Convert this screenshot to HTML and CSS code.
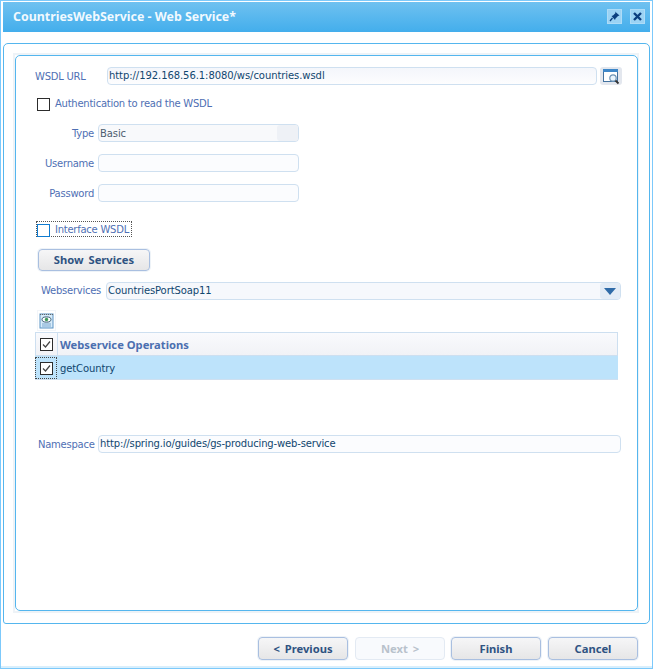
FILE: index.html
```html
<!DOCTYPE html>
<html lang="en">
<head>
<meta charset="utf-8">
<title>CountriesWebService - Web Service*</title>
<link rel="stylesheet" href="styles.css">
</head>
<body>
<div class="window">
  <header class="titlebar">
    <span class="title">CountriesWebService - Web Service*</span>
    <div class="tools">
      <span class="tool"><svg width="13" height="13" viewBox="0 0 13 13"><path d="M7 1.5l4.5 4-1.5.5-2.5 2.5-.5 1.5L3.5 6l1.5-.5L7.5 3z" fill="#0b3f7f"/><path d="M4.5 8L2 11" stroke="#0b3f7f" stroke-width="1.3"/></svg></span>
      <span class="tool"><svg width="13" height="13" viewBox="0 0 13 13"><path d="M3 3l7 7M10 3l-7 7" stroke="#0b3f7f" stroke-width="2.4"/></svg></span>
    </div>
  </header>
  <div class="outer">
    <div class="glow">
      <main class="inner">
        <div class="row row-url">
          <label class="lbl lbl-url">WSDL URL</label>
          <div class="field field-url">http://192.168.56.1:8080/ws/countries.wsdl</div>
          <button class="iconbtn" type="button" aria-label="Browse">
            <svg width="20" height="17" viewBox="0 0 20 17"><rect x="2.5" y="2.5" width="14" height="11" fill="#fff" stroke="#44729f"/><rect x="2" y="1" width="15" height="3" fill="#3f87c8"/><circle cx="12" cy="10" r="3.2" fill="#eaf5fd" stroke="#6d93b5" stroke-width="1.2"/><path d="M14.5 12.5l3 3" stroke="#333" stroke-width="1.8"/></svg>
          </button>
        </div>
        <div class="row row-auth">
          <span class="check"></span>
          <span class="lbl lbl-up">Authentication to read the WSDL</span>
        </div>
        <div class="row row-type">
          <label class="lbl lbl-right">Type</label>
          <div class="field field-short field-type">Basic<span class="type-arrow"></span></div>
        </div>
        <div class="row row-cred">
          <label class="lbl lbl-right">Username</label>
          <div class="field field-short"></div>
        </div>
        <div class="row row-cred">
          <label class="lbl lbl-right">Password</label>
          <div class="field field-short"></div>
        </div>
        <div class="row row-iface">
          <div class="focus">
            <span class="check check-blue"></span>
            <span class="lbl lbl-up">Interface WSDL</span>
          </div>
        </div>
        <button class="btn btn-show" type="button">Show Services</button>
        <div class="row row-ws">
          <label class="lbl lbl-ws lbl-up">Webservices</label>
          <div class="field field-ws">CountriesPortSoap11<span class="ws-arrow"><svg width="12" height="7" viewBox="0 0 12 7"><path d="M0 0h12L6 7z" fill="#2f6ba8"/></svg></span></div>
        </div>
        <div class="doc-icon">
          <svg width="15" height="16" viewBox="0 0 15 16"><rect x="1" y="1" width="13" height="14" fill="#d8ecfa" stroke="#5b93c4"/><path d="M1 1.5h13" stroke="#666" stroke-dasharray="1 1"/><ellipse cx="7.5" cy="6.5" rx="4.5" ry="2.6" fill="#fff" stroke="#35566f"/><circle cx="7.5" cy="6.5" r="1.7" fill="#3f9a5b"/><path d="M3 11h9M3 13h9" stroke="#7aa7cf"/></svg>
        </div>
        <div class="table">
          <div class="tr th">
            <div class="cell-check"><span class="check check-on"><svg width="11" height="11" viewBox="0 0 11 11"><path d="M2 5.5L4.5 8 9 2.5" fill="none" stroke="#444" stroke-width="1.2"/></svg></span></div>
            <div class="cell-text">Webservice Operations</div>
          </div>
          <div class="tr td">
            <div class="cell-check cell-focus"><span class="check check-on"><svg width="11" height="11" viewBox="0 0 11 11"><path d="M2 5.5L4.5 8 9 2.5" fill="none" stroke="#444" stroke-width="1.2"/></svg></span></div>
            <div class="cell-text">getCountry</div>
          </div>
        </div>
        <div class="row row-ns">
          <label class="lbl lbl-ns">Namespace</label>
          <div class="field field-ns">http://spring.io/guides/gs-producing-web-service</div>
        </div>
      </main>
    </div>
  </div>
  <footer class="footer">
    <button class="btn" type="button">&lt; Previous</button>
    <button class="btn btn-disabled" type="button" disabled>Next &gt;</button>
    <button class="btn btn-finish" type="button">Finish</button>
    <button class="btn" type="button">Cancel</button>
  </footer>
</div>
</body>
</html>
```
FILE: styles.css
```css
* { box-sizing: border-box; }
html, body { margin: 0; padding: 0; background: #fff; }
body {
  font-family: "DejaVu Sans", sans-serif;
  font-size: 10px;
  color: #1b4f7a;
}
.window {
  width: 653px;
  height: 669px;
  border: 1px solid #7cc9fb;
  padding: 1px 2px 2px;
  display: flex;
  flex-direction: column;
  overflow: hidden;
  box-shadow: inset 0 -2px 0 #d9effc;
}
.titlebar {
  height: 30px;
  flex: none;
  display: flex;
  align-items: center;
  justify-content: space-between;
  background: linear-gradient(#6fc1f0, #43aeec);
  padding: 0 5px 1px 10px;
}
.title { color: #f1f9fe; font-family: "Noto Sans", sans-serif; font-weight: bold; font-size: 12.4px; }
.tools { display: flex; gap: 8px; }
.tool {
  width: 15px;
  height: 15px;
  display: flex;
  align-items: center;
  justify-content: center;
  background: #9cd3f4;
  border: 1px solid #aedcf7;
}
.outer {
  height: 581px;
  margin-top: 11px;
  flex: none;
  border: 1px solid #55b6ee;
  border-radius: 5px 5px 5px 3px;
  padding: 9px 10px 10px 9px;
}
.glow { height: 100%; border: 2px solid #eef3f7; }
.inner {
  height: 100%;
  margin: 0 -1px 0 0;
  border: 1px solid #55b6ee;
  border-radius: 5px;
  padding: 11px 0 0 19px;
  display: flex;
  flex-direction: column;
  align-items: flex-start;
}
.row { display: flex; align-items: center; }
.lbl { color: #4f70b4; font-size: 10px; letter-spacing: -0.25px; white-space: nowrap; }
.lbl-up { margin-bottom: 2px; }
.field {
  height: 18px;
  border: 1px solid #cfe0f0;
  border-radius: 4px;
  background: #fbfcfe;
  color: #10466f;
  font-size: 10px;
  line-height: 16px;
  padding-left: 1px;
  white-space: nowrap;
}
.row-url { height: 18px; }
.lbl-url { width: 72px; }
.field-url { width: 490px; letter-spacing: -0.07px; background: linear-gradient(#f4f6fb, #fdfdfe); }
.iconbtn {
  width: 22px;
  height: 18px;
  margin-left: 3px;
  padding: 0 0 0 1px;
  border: 0;
  border-radius: 3px;
  background: #e3e7ee;
  display: flex;
  align-items: center;
}
.row-auth { margin: 12px 0 0 2px; height: 14px; gap: 5px; }
.check {
  width: 13px;
  height: 13px;
  flex: none;
  border: 1px solid #2c2c2c;
  background: #fff;
  display: flex;
  align-items: center;
  justify-content: center;
}
.check-blue { border-color: #0f7bd0; }
.lbl-right { width: 59px; text-align: right; margin-right: 4px; }
.field-short { width: 201px; }
.row-type { margin-top: 13px; height: 18px; }
.field-type { position: relative; background: #f8f9fb; color: #4d5d70; line-height: 17px; letter-spacing: -0.1px; }
.type-arrow {
  position: absolute;
  top: 0;
  right: 0;
  width: 21px;
  height: 16px;
  border-radius: 3px;
  background: #eef1f6;
}
.row-cred { margin-top: 12px; height: 18px; }
.row-iface { margin: 19px 0 0 1px; }
.focus {
  display: flex;
  align-items: center;
  gap: 5px;
  height: 16px;
  width: 96px;
  padding: 2px 0 0 0;
  border: 1px dotted #555;
}
.focus .check { margin-top: 1px; }
.btn {
  width: 90px;
  height: 23px;
  border: 1px solid #a9bfe0;
  border-radius: 4px;
  background: linear-gradient(#f6f6f7, #e6e6e7);
  box-shadow: 0 0 0 1px #eef3f8;
  color: #2f5382;
  font-family: "Noto Sans", sans-serif;
  font-size: 11.2px;
  word-spacing: 2px;
  font-weight: bold;
  padding: 0;
}
.btn-show { width: 112px; height: 22px; margin: 12px 0 0 3px; padding-bottom: 2px; }
.btn-disabled { background: #f8fafd; border-color: #e3eaf3; color: #b8c2cc; box-shadow: none; }
.btn-finish { margin-left: -1px; }
.row-ws { margin: 11px 0 0 6px; height: 18px; }
.lbl-ws { width: 60px; margin-right: 5px; }
.field-ws {
  width: 515px;
  position: relative;
  background: #f6f8fc;
  line-height: 15px;
  letter-spacing: -0.1px;
}
.ws-arrow {
  position: absolute;
  top: 0;
  right: 0;
  width: 20px;
  height: 16px;
  background: #e3ecf6;
  border-radius: 3px;
  display: flex;
  align-items: center;
  justify-content: center;
}
.doc-icon {
  width: 17px;
  height: 19px;
  margin: 11px 0 2px 3px;
  display: flex;
  align-items: center;
  justify-content: center;
  box-shadow: 0 0 0 1px #f2f5f9;
}
.table { width: 583px; }
.tr { display: flex; align-items: center; }
.th {
  height: 24px;
  border: 1px solid #cddff0;
  background: linear-gradient(#f9fafd, #f1f2f6);
}
.td {
  height: 24px;
  background: #bde3fb;
  border-top: 1px solid #bde3fb;
  border-bottom: 1px solid #cfe0f0;
}
.cell-check {
  width: 22px;
  height: 100%;
  flex: none;
  display: flex;
  align-items: center;
  justify-content: center;
  border-right: 1px solid #cddff0;
}
.cell-focus { border: 1px dotted #444; }
.cell-text { padding-left: 3px; }
.th .cell-text { color: #4b6fb0; font-family: "Noto Sans", sans-serif; font-size: 11.2px; font-weight: bold; padding-left: 2px; }
.td .cell-text { color: #10466f; font-size: 10px; letter-spacing: -0.1px; }
.row-ns { margin: 55px 0 0 3px; height: 18px; }
.lbl-ns { width: 60px; }
.field-ns { width: 523px; letter-spacing: -0.15px; }
.footer {
  flex: none;
  display: flex;
  justify-content: flex-end;
  gap: 7px;
  padding: 13px 12px 0 0;
}
```
